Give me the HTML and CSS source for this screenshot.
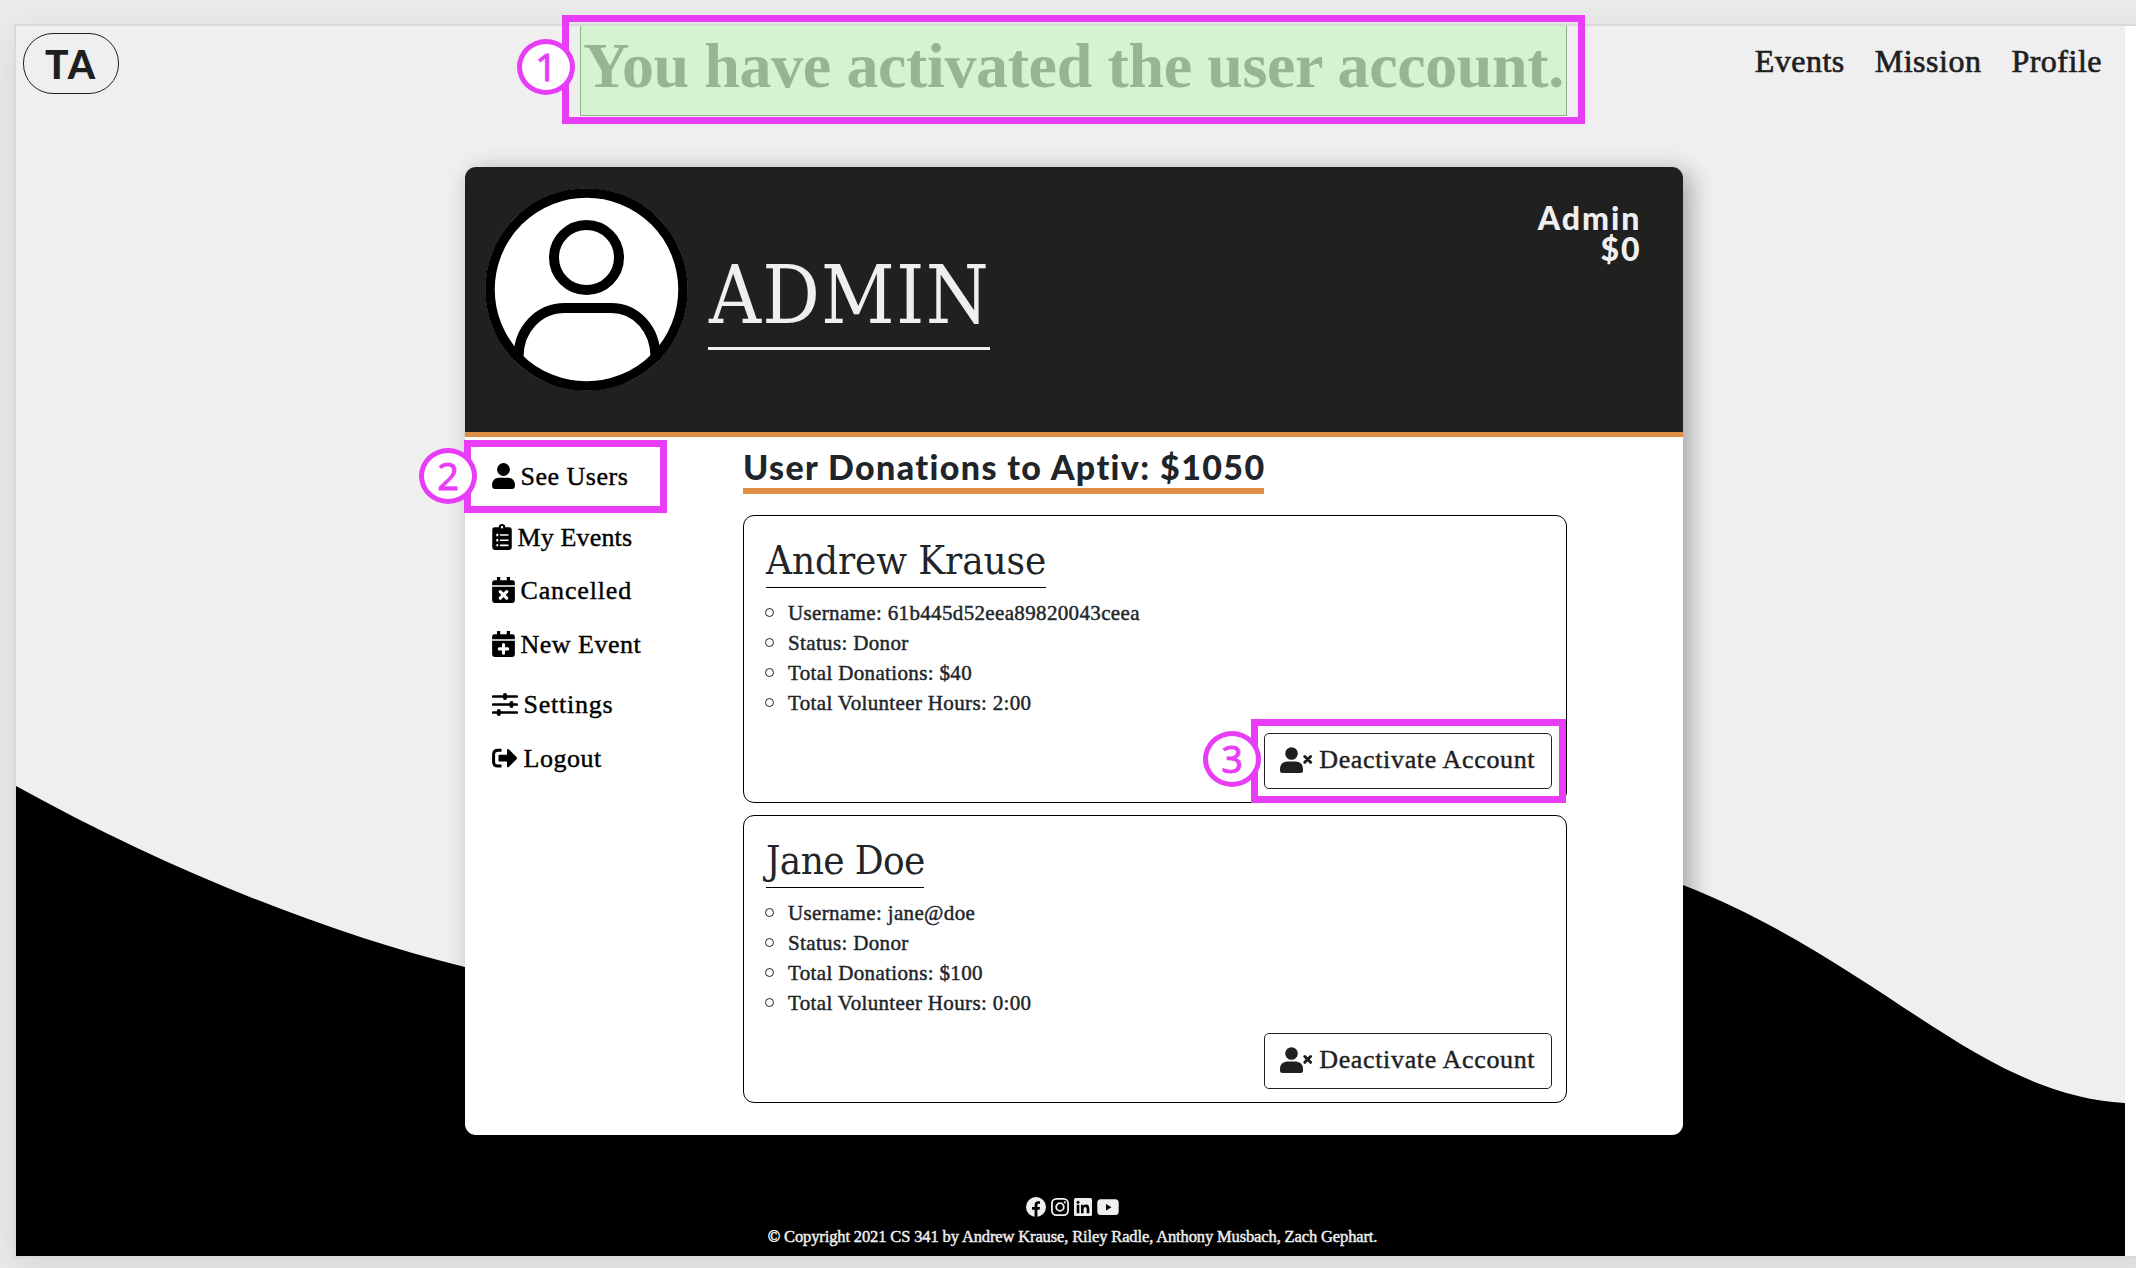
FILE: index.html
```html
<!DOCTYPE html>
<html lang="en">
<head>
<meta charset="utf-8">
<title>Admin Profile</title>
<link rel="stylesheet" href="styles.css">
</head>
<body>
<div class="frame">
<div class="page">
  <svg class="wave" viewBox="0 0 2109 470" preserveAspectRatio="none"><path d="M0 0C150 83 310 147 449 181C880 280 1310 -60 1667 99C1867 178 1960 308 2109 317V470H0Z"/></svg>

  <header class="topbar">
    <a class="logo">TA</a>
    <div class="flash">You have activated the user account.</div>
    <nav class="nav"><a>Events</a><a>Mission</a><a>Profile</a></nav>
  </header>

  <main class="card">
    <section class="hero">
      <svg class="avatar" viewBox="0 0 203 203">
        <circle cx="101.500" cy="101.500" r="101" fill="#fff"/>
        <path d="M33.500 172V169C33.500 142 53 120 80 120H126C152 120 170.500 142 170.500 169V172" fill="none" stroke="#000" stroke-width="10"/>
        <circle cx="101.500" cy="69.500" r="32.500" fill="none" stroke="#000" stroke-width="10"/>
        <circle cx="101.500" cy="101.500" r="96.500" fill="none" stroke="#000" stroke-width="9.500"/>
      </svg>
      <h1 class="title">ADMIN</h1>
      <div class="role"><span>Admin</span><span>$0</span></div>
    </section>

    <div class="body">
      <ul class="menu">
        <li><svg width="23" height="26" viewBox="0 0 448 512"><circle cx="224" cy="128" r="126"/><path d="M130 288H318C390 288 448 346 448 418V464A48 48 0 0 1 400 512H48A48 48 0 0 1 0 464V418C0 346 58 288 130 288Z"/></svg><span>See Users</span></li>
        <li><svg width="20" height="26" viewBox="0 0 384 512"><path fill-rule="evenodd" d="M48 64H128A64 64 0 0 1 256 64H336A48 48 0 0 1 384 112V464A48 48 0 0 1 336 512H48A48 48 0 0 1 0 464V112A48 48 0 0 1 48 64ZM192 40A24 24 0 1 0 192 88A24 24 0 1 0 192 40ZM80 192V240H120V192ZM152 200V232H320V200ZM80 296V344H120V296ZM152 304V336H320V304ZM80 400V440H120V400ZM152 404V436H320V404Z"/></svg><span>My Events</span></li>
        <li><svg width="23" height="26" viewBox="0 0 448 512"><path d="M96 0H160V64H288V0H352V64H400A48 48 0 0 1 448 112V160H0V112A48 48 0 0 1 48 64H96ZM0 190H448V464A48 48 0 0 1 400 512H48A48 48 0 0 1 0 464Z"/><path d="M160 288L288 416M288 288L160 416" stroke="#fff" stroke-width="64" stroke-linecap="round"/></svg><span>Cancelled</span></li>
        <li><svg width="23" height="26" viewBox="0 0 448 512"><path d="M96 0H160V64H288V0H352V64H400A48 48 0 0 1 448 112V160H0V112A48 48 0 0 1 48 64H96ZM0 190H448V464A48 48 0 0 1 400 512H48A48 48 0 0 1 0 464Z"/><path d="M224 268V436M140 352H308" stroke="#fff" stroke-width="60" stroke-linecap="round"/></svg><span>New Event</span></li>
        <li><svg width="26" height="26" viewBox="0 0 26 26"><path d="M1.200 5.500H24.800M1.200 13.500H24.800M1.200 21.500H24.800" stroke="#000" stroke-width="2.700" stroke-linecap="round"/><path d="M13 4V7M19.500 12V15M6.800 20V23" stroke="#000" stroke-width="4" stroke-linecap="round"/></svg><span>Settings</span></li>
        <li><svg width="26" height="26" viewBox="0 0 26 26"><path d="M9.500 5.300H6C3 5.300 1.600 7 1.600 9.500V17C1.600 19.500 3 21 6 21H9.500" fill="none" stroke="#000" stroke-width="3"/><path d="M7.500 9.700H15V5.200Q15 3.200 16.800 4.300L24.500 12Q25.600 13.200 24.500 14.300L16.800 22Q15 23.100 15 21V16.600H7.500Q6.500 16.600 6.500 15.600V10.700Q6.500 9.700 7.500 9.700Z"/></svg><span>Logout</span></li>
      </ul>

      <div class="users">
        <h2 class="total">User Donations to Aptiv: $1050</h2>
        <article class="user">
          <h3>Andrew Krause</h3>
          <ul>
            <li>Username: 61b445d52eea89820043ceea</li>
            <li>Status: Donor</li>
            <li>Total Donations: $40</li>
            <li>Total Volunteer Hours: 2:00</li>
          </ul>
          <button class="deactivate"><svg width="33" height="26" viewBox="0 0 33 26"><circle cx="11.500" cy="6.500" r="6.300"/><path d="M7 14.500H16Q22.500 15 23 21.500V23.500Q23 26 20.500 26H2.500Q0 26 0 23.500V21.500Q.5 15 7 14.500Z"/><path d="M24.800 9.500L30.600 15.300M30.600 9.500L24.800 15.300" stroke="#202020" stroke-width="3" stroke-linecap="round"/></svg><span>Deactivate Account</span></button>
        </article>
        <article class="user">
          <h3 class="short">Jane Doe</h3>
          <ul>
            <li>Username: jane@doe</li>
            <li>Status: Donor</li>
            <li>Total Donations: $100</li>
            <li>Total Volunteer Hours: 0:00</li>
          </ul>
          <button class="deactivate"><svg width="33" height="26" viewBox="0 0 33 26"><circle cx="11.500" cy="6.500" r="6.300"/><path d="M7 14.500H16Q22.500 15 23 21.500V23.500Q23 26 20.500 26H2.500Q0 26 0 23.500V21.500Q.5 15 7 14.500Z"/><path d="M24.800 9.500L30.600 15.300M30.600 9.500L24.800 15.300" stroke="#202020" stroke-width="3" stroke-linecap="round"/></svg><span>Deactivate Account</span></button>
        </article>
      </div>
    </div>
  </main>

  <footer class="footer">
    <div class="social">
      <svg width="20" height="20" viewBox="0 0 20 20"><circle cx="10" cy="10" r="10"/><path d="M8.600 20V12.800H6V10H8.600V8Q8.600 4.200 12.200 4.200H14V6.700H12.700Q11.400 6.700 11.400 8V10H14L13.500 12.800H11.400V20Z" fill="#000"/></svg>
      <svg width="18" height="20" viewBox="0 0 18 20"><g fill="none" stroke="#efefef" stroke-width="1.800"><rect x=".9" y="1.900" width="16.200" height="16.200" rx="4.500"/><circle cx="9" cy="10" r="3.800"/></g><circle cx="13.800" cy="5.400" r="1.100"/></svg>
      <svg width="18" height="20" viewBox="0 0 18 20"><rect y="1" width="18" height="18" rx="1.500"/><path d="M2.700 7.800H5.300V16.300H2.700ZM7 7.800H9.500V9Q10.300 7.600 12.100 7.600Q15.300 7.600 15.300 11.400V16.300H12.700V12Q12.700 9.900 11.200 9.900Q9.600 9.900 9.600 12V16.300H7Z" fill="#000"/><circle cx="4" cy="5.200" r="1.500" fill="#000"/></svg>
      <svg width="22" height="20" viewBox="0 0 22 20"><rect x=".3" y="2.200" width="21.400" height="15.800" rx="3.500"/><path d="M9 7V13.400L14.500 10.200Z" fill="#000"/></svg>
    </div>
    <p>© Copyright 2021 CS 341 by Andrew Krause, Riley Radle, Anthony Musbach, Zach Gephart.</p>
  </footer>
</div>
</div>

<div class="mark mark-1"><b>1</b></div>
<div class="mark mark-2"><b>2</b></div>
<div class="mark mark-3"><b>3</b></div>
</body>
</html>
```
FILE: styles.css
```css
* { box-sizing: border-box; }
body {
  margin: 0;
  padding: 24px 0 0 14px;
  width: 2136px;
  height: 1268px;
  overflow: hidden;
  position: relative;
  background: #ebebeb;
  font-family: "Liberation Serif", serif;
  color: #212529;
}
ul, h1, h2, h3, p { margin: 0; padding: 0; font-weight: normal; }
li { list-style: none; }

.frame {
  width: 2140px;
  height: 1234px;
  border: 2px solid #d9d9d9;
  background: #fff;
  box-shadow: 0 12px 40px rgba(0,0,0,.09);
}
.page {
  width: 2109px;
  height: 1230px;
  position: relative;
  isolation: isolate;
  background: #efefef;
}
.wave { position: absolute; z-index: -1; left: 0; bottom: 0; width: 100%; height: 470px; }

.topbar { height: 141px; display: flex; align-items: flex-start; }
.logo {
  width: 96px;
  height: 61px;
  margin: 7px 0 0 7px;
  border: 1.5px solid #1f1f1f;
  border-radius: 30px;
  text-align: center;
  font: 900 39px/60px Lato, sans-serif;
  letter-spacing: 2px;
  color: #1f1f1f;
}
.flash {
  width: 987px;
  height: 90px;
  margin: 0 auto 0 461px;
  border: 1px solid #93b08e;
  border-top: 0;
  background: #d5f3d1;
  color: #98b593;
  font-size: 64px;
  font-weight: bold;
  line-height: 80px;
  letter-spacing: -.38px;
  text-align: center;
  white-space: nowrap;
}
.nav {
  display: flex;
  gap: 30px;
  padding-right: 23px;
  font-size: 32px;
  line-height: 70px;
  letter-spacing: .5px;
  color: #1f1f1f;
  -webkit-text-stroke: .7px #1f1f1f;
}

.card {
  width: 1217.500px;
  height: 968px;
  margin-left: 449px;
  border-radius: 11px;
  overflow: hidden;
  background: #fff;
  box-shadow: 7px 5px 24px rgba(0,0,0,.32);
}
.hero {
  height: 270px;
  display: flex;
  align-items: flex-start;
  padding: 21px 41px 0 20px;
  background: #202020;
  border-bottom: 5px solid #e09045;
  color: #efefef;
}
.avatar { width: 203px; height: 203px; }
.title {
  margin: 63px 0 0 20px;
  padding-left: 1px;
  width: 282px;
  font: 80px/90px "DejaVu Serif Condensed", "DejaVu Serif", serif;
  letter-spacing: 1.200px;
  padding-bottom: 6px;
  border-bottom: 3px solid #f3eff1;
}
.role {
  margin: 14px 0 0 auto;
  display: flex;
  flex-direction: column;
  align-items: flex-end;
  font: 900 32px/31px Lato, sans-serif;
  letter-spacing: 2px;
}

.body { display: flex; }
.menu {
  width: 278px;
  padding: 12.500px 0 0 26.500px;
  color: #000;
  font-size: 26px;
  line-height: 53.500px;
  -webkit-text-stroke: .4px #000;
}
.menu li { display: flex; align-items: center; gap: 6px; height: 53.500px; letter-spacing: .5px; }
.menu svg { margin-top: -1px; }
.menu li:nth-child(2) { margin-top: 7.500px; letter-spacing: .15px; }
.menu li:nth-child(3) { letter-spacing: .85px; }
.menu li:nth-child(5) { margin-top: 7px; letter-spacing: .75px; }

.users { width: 824px; padding-top: 8.800px; }
.total {
  width: 521px;
  height: 48px;
  border-bottom: 6px solid #e09045;
  font: 900 34px/42px Lato, sans-serif;
  letter-spacing: 1.380px;
  white-space: nowrap;
}
.user {
  height: 288.500px;
  margin-top: 11.500px;
  padding: 19px 14.500px 0 22px;
  border: 1.300px solid #000;
  border-radius: 11px;
  display: flex;
  flex-direction: column;
}
.total + .user { margin-top: 21.200px; }
.user h3 {
  width: 280px;
  font: 40px/50px "DejaVu Serif Condensed", "DejaVu Serif", serif;
  letter-spacing: -.1px;
  padding-bottom: 2px;
  border-bottom: 1.500px solid #000;
  white-space: nowrap;
}
.user h3.short { width: 158px; letter-spacing: -.6px; }
.user ul { padding-top: 10px; font-size: 21px; line-height: 30px; letter-spacing: .35px; -webkit-text-stroke: .45px #212529; }
.user li { display: flex; align-items: center; }
.user li::before { content: ""; width: 7px; height: 7px; margin: 0 14px 0 -1px; border: 1.300px solid #212529; border-radius: 50%; }
.deactivate {
  display: flex;
  align-items: center;
  justify-content: center;
  gap: 6px;
  width: 287.500px;
  height: 56px;
  margin: 15.500px 0 0 auto;
  padding: 0 0 3px;
  border: 1.500px solid #222;
  border-radius: 5px;
  background: #fff;
  color: #202020;
  fill: #202020;
  font: 26px "Liberation Serif", serif;
  letter-spacing: .65px;
  -webkit-text-stroke: .4px #202020;
}

.footer { padding-top: 62px; text-align: center; color: #efefef; fill: #efefef; }
.social { display: flex; justify-content: center; gap: 4.700px; height: 20px; padding-left: 4px; }
.footer p { margin-top: 9px; padding-left: 4px; font-size: 16.500px; line-height: 22px; letter-spacing: -.13px; -webkit-text-stroke: .45px #efefef; }

.mark { position: absolute; border: 7px solid #e83cf6; }
.mark b {
  position: absolute;
  width: 58px;
  height: 56px;
  border: 5px solid #e83cf6;
  border-radius: 50%;
  background: #fff;
  color: #e83cf6;
  text-align: center;
  font: 400 38px/45px "Noto Sans", sans-serif;
  -webkit-text-stroke: .8px #e83cf6;
}
.mark-1 { left: 562px; top: 15px; width: 1023px; height: 109px; }
.mark-1 b { left: -52px; top: 17px; }
.mark-2 { left: 464px; top: 440px; width: 203px; height: 73px; }
.mark-2 b { left: -52px; top: 1px; }
.mark-3 { left: 1251px; top: 719px; width: 315px; height: 84px; }
.mark-3 b { left: -55px; top: 5px; }
```
